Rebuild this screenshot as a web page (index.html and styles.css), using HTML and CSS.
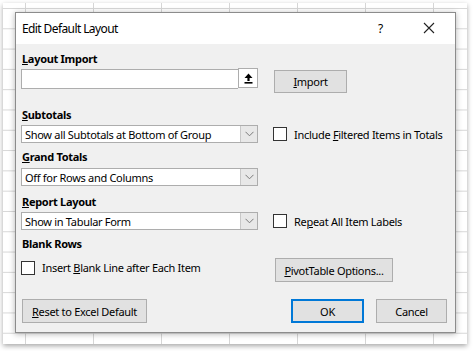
FILE: index.html
```html
<!DOCTYPE html>
<html lang="en">
  <head>
    <meta charset="UTF-8" />
    <title>Edit Default Layout</title>
    <link rel="stylesheet" href="styles.css">
  </head>
  <body>
    <div class="sheet">
      <div class="dialog">
        <div class="title-bar">
          <span class="title">Edit Default Layout</span>
          <span class="help">?</span>
          <svg class="close" width="12" height="12" viewBox="0 0 12 12">
            <path d="M1 1 L11 11 M11 1 L1 11" stroke="#222" stroke-width="1.1" fill="none" />
          </svg>
        </div>

        <div class="content">
          <div class="label label-first"><u>L</u>ayout Import</div>
          <div class="row row-import">
            <div class="file-field">
              <div class="file-input"></div>
              <div class="file-btn">
                <svg width="9" height="11" viewBox="0 0 9 11">
                  <path d="M4.5 0.5 L8.5 5 L5.6 5 L5.6 8 L3.4 8 L3.4 5 L0.5 5 Z" fill="#000" />
                  <rect x="0.5" y="9" width="8" height="1.6" fill="#000" />
                </svg>
              </div>
            </div>
            <button class="btn btn-import"><u>I</u>mport</button>
          </div>

          <div class="label label-subtotals"><u>S</u>ubtotals</div>
          <div class="row row-select">
            <div class="select">
              <span class="value">Show all Subtotals at Bottom of Group</span>
              <span class="arrow"><svg width="9" height="6" viewBox="0 0 9 6"><path d="M0.5 0.8 L4.5 4.8 L8.5 0.8" stroke="#7a7a7a" stroke-width="1" fill="none" /></svg></span>
            </div>
            <label class="check"><span class="box"></span><span>Include <u>F</u>iltered Items in Totals</span></label>
          </div>

          <div class="label label-grand"><u>G</u>rand Totals</div>
          <div class="row row-select row-grand">
            <div class="select">
              <span class="value">Off for Rows and Columns</span>
              <span class="arrow"><svg width="9" height="6" viewBox="0 0 9 6"><path d="M0.5 0.8 L4.5 4.8 L8.5 0.8" stroke="#7a7a7a" stroke-width="1" fill="none" /></svg></span>
            </div>
          </div>

          <div class="label label-report"><u>R</u>eport Layout</div>
          <div class="row row-select">
            <div class="select">
              <span class="value">Show in Tabular Form</span>
              <span class="arrow"><svg width="9" height="6" viewBox="0 0 9 6"><path d="M0.5 0.8 L4.5 4.8 L8.5 0.8" stroke="#7a7a7a" stroke-width="1" fill="none" /></svg></span>
            </div>
            <label class="check"><span class="box"></span><span>Re<u>p</u>eat All Item Labels</span></label>
          </div>

          <div class="label label-blank">Blank Rows</div>
          <div class="row row-blank">
            <label class="check check-left"><span class="box"></span><span>Insert <u>B</u>lank Line after Each Item</span></label>
            <button class="btn btn-pivot"><u>P</u>ivotTable Options...</button>
          </div>

          <div class="row row-footer">
            <button class="btn btn-reset"><u>R</u>eset to Excel Default</button>
            <button class="btn btn-ok">OK</button>
            <button class="btn btn-cancel">Cancel</button>
          </div>
        </div>
      </div>
    </div>
  </body>
</html>
```

FILE: styles.css
```css
* {
  box-sizing: border-box;
}

body {
  margin: 0;
  width: 474px;
  height: 351px;
  background-color: #ffffff;
  font-family: "Noto Sans", "Open Sans", sans-serif;
  font-size: 11px;
  letter-spacing: -0.3px;
  color: #000;
  overflow: hidden;
}

.sheet {
  margin: 3px;
  width: 464px;
  height: 341px;
  padding: 9px 0 0 12px;
  background-color: #fff;
  background-image: linear-gradient(to right, #d6d6d6 1px, transparent 1px),
    linear-gradient(to bottom, #d6d6d6 1px, transparent 1px);
  background-size: 68px 20.3px;
  background-position: 22px 5px;
  box-shadow: 0 2px 5px rgba(0, 0, 0, 0.35);
}

.dialog {
  width: 441px;
  height: 321px;
  border: 1px solid #8c8c8c;
  background-color: #f0f0f0;
  box-shadow: 0 1px 6px rgba(0, 0, 0, 0.3);
  display: flex;
  flex-direction: column;
}

.title-bar {
  height: 31px;
  background-color: #fff;
  display: flex;
  align-items: center;
  padding: 0 0 1px 6px;
}

.title {
  font-size: 12px;
  letter-spacing: -0.6px;
  flex: 1;
}

.help {
  font-size: 12px;
  margin-right: 40px;
}

.close {
  margin-right: 20px;
}

.content {
  padding: 0 0 0 5px;
}

.label {
  height: 14px;
  line-height: 14px;
  font-weight: bold;
  padding-left: 1px;
}

.label-first {
  margin-top: 8px;
}

.label-subtotals {
  margin-top: 15px;
}

.label-grand {
  margin-top: 7px;
}

.label-report {
  margin-top: 9px;
}

.label-blank {
  margin-top: 7px;
}

.row {
  display: flex;
  align-items: flex-start;
}

.row-import {
  margin-top: 2px;
  height: 25px;
}

.file-field {
  display: flex;
  width: 237px;
}

.file-input {
  width: 217px;
  height: 20px;
  margin-top: 1px;
  background-color: #fff;
  border: 1px solid #adadad;
  border-right: none;
}

.file-btn {
  width: 20px;
  height: 20px;
  background-color: #fff;
  border: 1px solid #adadad;
  display: flex;
  align-items: center;
  justify-content: center;
}

.btn {
  font-family: inherit;
  font-size: 11px;
  letter-spacing: -0.3px;
  color: #000;
  background-color: #e1e1e1;
  border: 1px solid #adadad;
  padding: 0;
  height: 24px;
}

.btn-import {
  width: 73px;
  height: 23px;
  margin: 2px 0 0 16px;
}

.row-select {
  margin-top: 3px;
  height: 18px;
  align-items: center;
}

.row-grand {
  margin-top: 4px;
}

.select {
  width: 237px;
  height: 18px;
  background-color: #fff;
  border: 1px solid #adadad;
  display: flex;
  align-items: center;
  padding-left: 3px;
}

.value {
  flex: 1;
}

.arrow {
  width: 17px;
  height: 16px;
  background-color: #e8e8e8;
  border-left: 1px solid #c8c8c8;
  display: flex;
  align-items: center;
  justify-content: center;
}

.check {
  display: flex;
  align-items: center;
  margin-left: 15px;
}

.box {
  width: 14px;
  height: 14px;
  background-color: #fff;
  border: 1px solid #333;
  margin-right: 7px;
}

.row-blank {
  margin-top: 7px;
  height: 24px;
}

.check-left {
  margin: 2px 0 0 0;
  width: 254px;
}

.btn-pivot {
  width: 118px;
}

.row-footer {
  margin-top: 17px;
}

.btn-reset {
  width: 125px;
  margin-left: 1px;
}

.btn-ok {
  width: 73px;
  margin-left: 144px;
  border: 1px solid #0078d7;
  box-shadow: inset 0 0 0 1px #0078d7;
}

.btn-cancel {
  width: 71px;
  margin-left: 12px;
}
```
